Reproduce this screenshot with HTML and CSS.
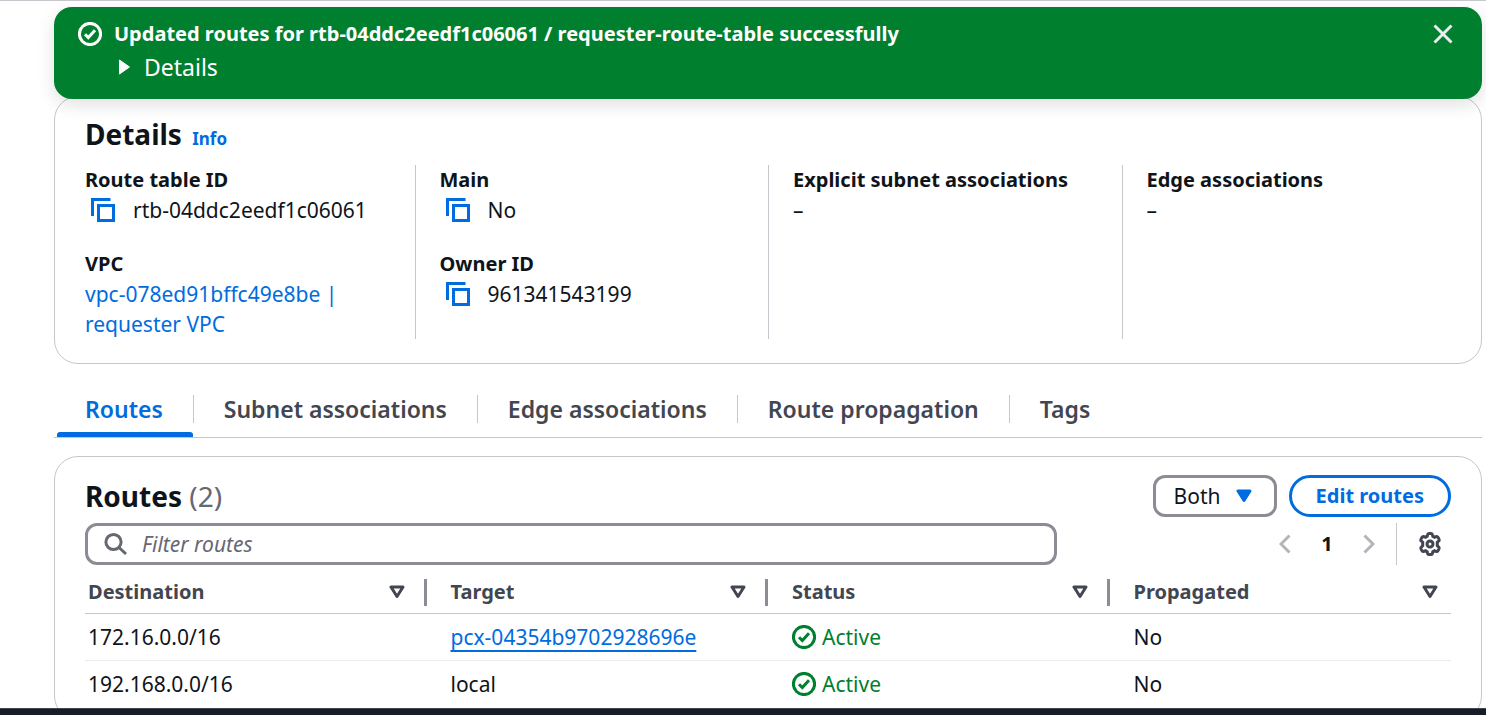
FILE: index.html
```
<!DOCTYPE html>
<html lang="en">
<head>
<meta charset="utf-8">
<title>Route table details</title>
<link rel="stylesheet" href="styles.css">
</head>
<body>
<svg class="sprite" aria-hidden="true">
  <symbol id="check" viewBox="0 0 24 24"><circle cx="12" cy="12" r="10.6"/><path d="M7 12.2l3.3 3.3L17 8.3"/></symbol>
  <symbol id="copy" viewBox="0 0 24 24"><path d="M19.5 1.5h-18v16.5"/><path d="M7.5 7.5h15v15h-15z"/></symbol>
  <symbol id="sort" viewBox="0 0 16 14"><path d="M2 2h12L8 11.5z"/></symbol>
</svg>
<main class="page">
  <section class="flash" role="status">
    <svg class="icon flash-icon"><use href="#check"/></svg>
    <div class="flash-body">
      <p class="flash-title">Updated routes for rtb-04ddc2eedf1c06061 / requester-route-table successfully</p>
      <button class="flash-toggle" type="button" aria-expanded="false"><svg class="caret" viewBox="0 0 12 16"><path d="M1 1l10 7-10 7z"/></svg>Details</button>
    </div>
    <button class="flash-close" type="button" aria-label="Dismiss"><svg viewBox="0 0 20 20"><path d="M1.5 1.5l17 17M18.5 1.5l-17 17"/></svg></button>
  </section>

  <section class="card details">
    <h2 class="heading">Details <a class="info" href="#info">Info</a></h2>
    <div class="columns">
      <dl class="column">
        <dt>Route table ID</dt>
        <dd class="copyable"><button class="copy" type="button" aria-label="Copy route table ID"><svg class="icon"><use href="#copy"/></svg></button>rtb-04ddc2eedf1c06061</dd>
        <dt>VPC</dt>
        <dd><a class="link" href="#vpc">vpc-078ed91bffc49e8be | requester VPC</a></dd>
      </dl>
      <dl class="column">
        <dt>Main</dt>
        <dd class="copyable"><button class="copy" type="button" aria-label="Copy main"><svg class="icon"><use href="#copy"/></svg></button>No</dd>
        <dt>Owner ID</dt>
        <dd class="copyable"><button class="copy" type="button" aria-label="Copy owner ID"><svg class="icon"><use href="#copy"/></svg></button>961341543199</dd>
      </dl>
      <dl class="column"><dt>Explicit subnet associations</dt><dd>–</dd></dl>
      <dl class="column"><dt>Edge associations</dt><dd>–</dd></dl>
    </div>
  </section>

  <div class="tabs" role="tablist">
    <button class="tab tab-active" type="button" role="tab" aria-selected="true">Routes</button>
    <button class="tab" type="button" role="tab" aria-selected="false">Subnet associations</button>
    <button class="tab" type="button" role="tab" aria-selected="false">Edge associations</button>
    <button class="tab" type="button" role="tab" aria-selected="false">Route propagation</button>
    <button class="tab" type="button" role="tab" aria-selected="false">Tags</button>
  </div>

  <section class="card routes">
    <div class="bar">
      <h2 class="heading">Routes <span class="count">(2)</span></h2>
      <div class="actions">
        <label class="select-wrap">
          <select class="select" aria-label="Route origin"><option>Both</option></select>
          <svg class="select-arrow" viewBox="0 0 16 14"><path d="M2 2h12L8 11.5z"/></svg>
        </label>
        <button class="edit" type="button">Edit routes</button>
      </div>
    </div>
    <div class="bar">
      <label class="filter">
        <svg class="search" viewBox="0 0 24 24"><circle cx="9.5" cy="10" r="7.6"/><path d="M15 15.5l7 6.5"/></svg>
        <input class="filter-input" type="search" placeholder="Filter routes" aria-label="Filter routes">
      </label>
      <div class="pager">
        <button class="arrow" type="button" aria-label="Previous page" disabled><svg viewBox="0 0 12 20"><path d="M10.5 1.5L2 10l8.5 8.5"/></svg></button>
        <button class="page-number" type="button">1</button>
        <button class="arrow" type="button" aria-label="Next page" disabled><svg viewBox="0 0 12 20"><path d="M1.5 1.5L10 10l-8.500 8.500"/></svg></button>
        <button class="settings" type="button" aria-label="Preferences"><svg class="icon" viewBox="0 0 24 24"><path d="M9.500 2.800Q9.700 1.500 11 1.500h2q1.300 0 1.500 1.300l.3 1.500 1.700 1 1.500-.6q1.300-.4 2 .7l1 1.700q.6 1.200-.4 2l-1.300 1.100v3.600l1.300 1.100q1 .8.4 2l-1 1.700q-.7 1.100-2 .7l-1.500-.6-1.700 1-.3 1.500q-.2 1.300-1.500 1.300h-2q-1.300 0-1.500-1.300l-.3-1.500-1.700-1-1.500.6q-1.300.4-2-.7l-1-1.700q-.6-1.200.4-2l1.300-1.100v-3.600L3.400 9.100q-1-.8-.4-2l1-1.700q.7-1.100 2-.7l1.500.6 1.700-1z"/><circle cx="12" cy="12" r="3"/></svg></button>
      </div>
    </div>
    <table class="table">
      <thead>
        <tr>
          <th><div class="th">Destination<svg class="sort"><use href="#sort"/></svg></div></th>
          <th><div class="th">Target<svg class="sort"><use href="#sort"/></svg></div></th>
          <th><div class="th">Status<svg class="sort"><use href="#sort"/></svg></div></th>
          <th><div class="th">Propagated<svg class="sort"><use href="#sort"/></svg></div></th>
        </tr>
      </thead>
      <tbody>
        <tr>
          <td>172.16.0.0/16</td>
          <td><a class="link link-underlined" href="#pcx">pcx-04354b9702928696e</a></td>
          <td><span class="status"><svg class="icon"><use href="#check"/></svg>Active</span></td>
          <td>No</td>
        </tr>
        <tr>
          <td>192.168.0.0/16</td>
          <td>local</td>
          <td><span class="status"><svg class="icon"><use href="#check"/></svg>Active</span></td>
          <td>No</td>
        </tr>
      </tbody>
    </table>
  </section>
</main>
<footer class="footer"></footer>
</body>
</html>
```
FILE: styles.css
```
* { box-sizing: border-box; }
body {
  margin: 0;
  height: 100vh;
  display: flex;
  flex-direction: column;
  overflow: hidden;
  background: #fff;
  color: #0f141a;
  font: 400 21px/30px "Noto Sans", "Open Sans", sans-serif;
}
h2, p, dl, dd { margin: 0; }
button, input, select { font: inherit; color: inherit; }
button { padding: 0; border: 0; background: none; }
svg { display: block; flex: none; fill: none; stroke: currentColor; stroke-width: 3; }
a { color: #006ce0; text-decoration: none; }
.sprite { position: absolute; width: 0; height: 0; }
.icon { width: 24px; height: 24px; }

.page {
  flex: 1;
  min-height: 0;
  overflow: hidden;
  border-top: 1px solid #c6c6cd;
  padding: 6px 4px 0 54px;
}
.footer { flex: none; height: 7px; background: #161d26; border-top: 1px solid #424650; }

.flash {
  position: relative;
  display: flex;
  gap: 12px;
  height: 92px;
  padding: 12px 29px 12px 24px;
  border-radius: 18px;
  background: #00802f;
  color: #fff;
  box-shadow: 0 6px 18px rgba(0, 7, 22, 0.12);
}
.flash-icon { margin-top: 3px; }
.flash-body { flex: 1; }
.flash-title { font-size: 20px; font-weight: 700; }
.flash-toggle { display: flex; align-items: center; gap: 13px; padding: 3px 4px; font-size: 23px; }
.caret { width: 13px; height: 16px; fill: currentColor; stroke-width: 1; stroke-linejoin: round; }
.flash-close { align-self: flex-start; margin-top: 5px; color: #ebebf0; }
.flash-close svg { width: 20px; height: 20px; }

.card { border: 1px solid #c6c6cd; border-radius: 24px; padding: 17px 30px 0; }
.heading { font-size: 28px; line-height: 42px; font-weight: 700; }
.details { margin-top: -3px; padding-bottom: 24px; }
.details .heading { line-height: 40px; margin-bottom: 6px; }
.info { margin-left: 3px; font-size: 17px; }
.columns { display: grid; grid-template-columns: repeat(4, 1fr); margin: 0 -24px; }
.column { padding: 0 24px; }
.column + .column { border-left: 1px solid #c6c6cd; }
dt { font-size: 20px; font-weight: 700; }
dd + dt { margin-top: 24px; }
.copyable { display: flex; align-items: center; gap: 18px; padding-left: 6px; }
.copy { color: #006ce0; }

.tabs { display: flex; margin-top: 24px; padding-bottom: 13px; border-bottom: 1px solid #c6c6cd; }
.tab {
  position: relative;
  margin: 7px 0 1px;
  padding: 0 30px;
  border-left: 1px solid #c6c6cd;
  color: #424650;
  font-size: 23px;
  line-height: 28px;
  font-weight: 600;
}
.tab-active { border-left-color: transparent; color: #006ce0; }
.tab-active::after {
  content: "";
  position: absolute;
  left: 2px;
  right: 0;
  bottom: -14px;
  height: 5px;
  border-radius: 3px 3px 0 0;
  background: #006ce0;
}

.routes { margin-top: 18px; padding: 18px 30px 12px; }
.bar { display: flex; align-items: center; justify-content: space-between; }
.bar + .bar { margin-top: 6px; }
.count { color: #656871; font-weight: 400; }
.actions { display: flex; gap: 12px; }
.select-wrap { position: relative; display: block; }
.select {
  appearance: none;
  width: 124px;
  height: 42px;
  padding: 0 18px;
  border: 3px solid #8c8c94;
  border-radius: 12px;
  background: #fff;
  line-height: 30px;
}
.select-arrow { position: absolute; right: 25px; top: 14px; width: 16px; height: 14px; color: #006ce0; fill: currentColor; stroke-linejoin: round; }
.edit {
  height: 42px;
  padding: 0 24px;
  border: 3px solid #006ce0;
  border-radius: 21px;
  color: #006ce0;
  font-size: 20px;
  font-weight: 700;
}
.filter { position: relative; width: 72%; max-width: 972px; }
.filter-input {
  display: block;
  width: 100%;
  height: 42px;
  padding: 0 16px 0 54px;
  border: 3px solid #8c8c94;
  border-radius: 12px;
  outline: 0;
}
.filter-input::placeholder { color: #656871; font-style: italic; opacity: 1; }
.search { position: absolute; left: 19px; top: 9px; width: 24px; height: 24px; color: #656871; }
.pager { display: flex; align-items: center; height: 42px; }
.arrow { color: #b4b4bb; }
.arrow svg { width: 12px; height: 20px; }
.page-number { width: 72px; font-size: 20px; font-weight: 700; }
.settings { display: flex; align-items: center; height: 42px; margin-left: 21px; padding: 0 9px 0 21px; border-left: 1px solid #c6c6cd; color: #424650; }

.table { width: 100%; table-layout: fixed; border-collapse: separate; border-spacing: 0; }
.table th { padding: 9px 0 3px; border-bottom: 1px solid #c6c6cd; color: #424650; font-size: 20px; font-weight: 700; text-align: left; }
.th { display: flex; align-items: center; justify-content: space-between; height: 36px; padding: 0 22px 0 24px; }
.table th:first-child .th, .table td:first-child { padding-left: 3px; }
.table th:last-child .th { padding-right: 13px; }
.table th:not(:last-child) .th { background: linear-gradient(#8c8c94, #8c8c94) right center / 3px 27px no-repeat; }
.sort { width: 16px; height: 14px; stroke-linejoin: round; }
.table td { padding: 8px 0 8px 24px; border-bottom: 1px solid #ebebf0; }
.table tr:last-child td { border-bottom: 0; }
.link-underlined { text-decoration: underline 2px; text-underline-offset: 5px; }
.status { display: flex; align-items: center; gap: 6px; color: #00802f; }
```
